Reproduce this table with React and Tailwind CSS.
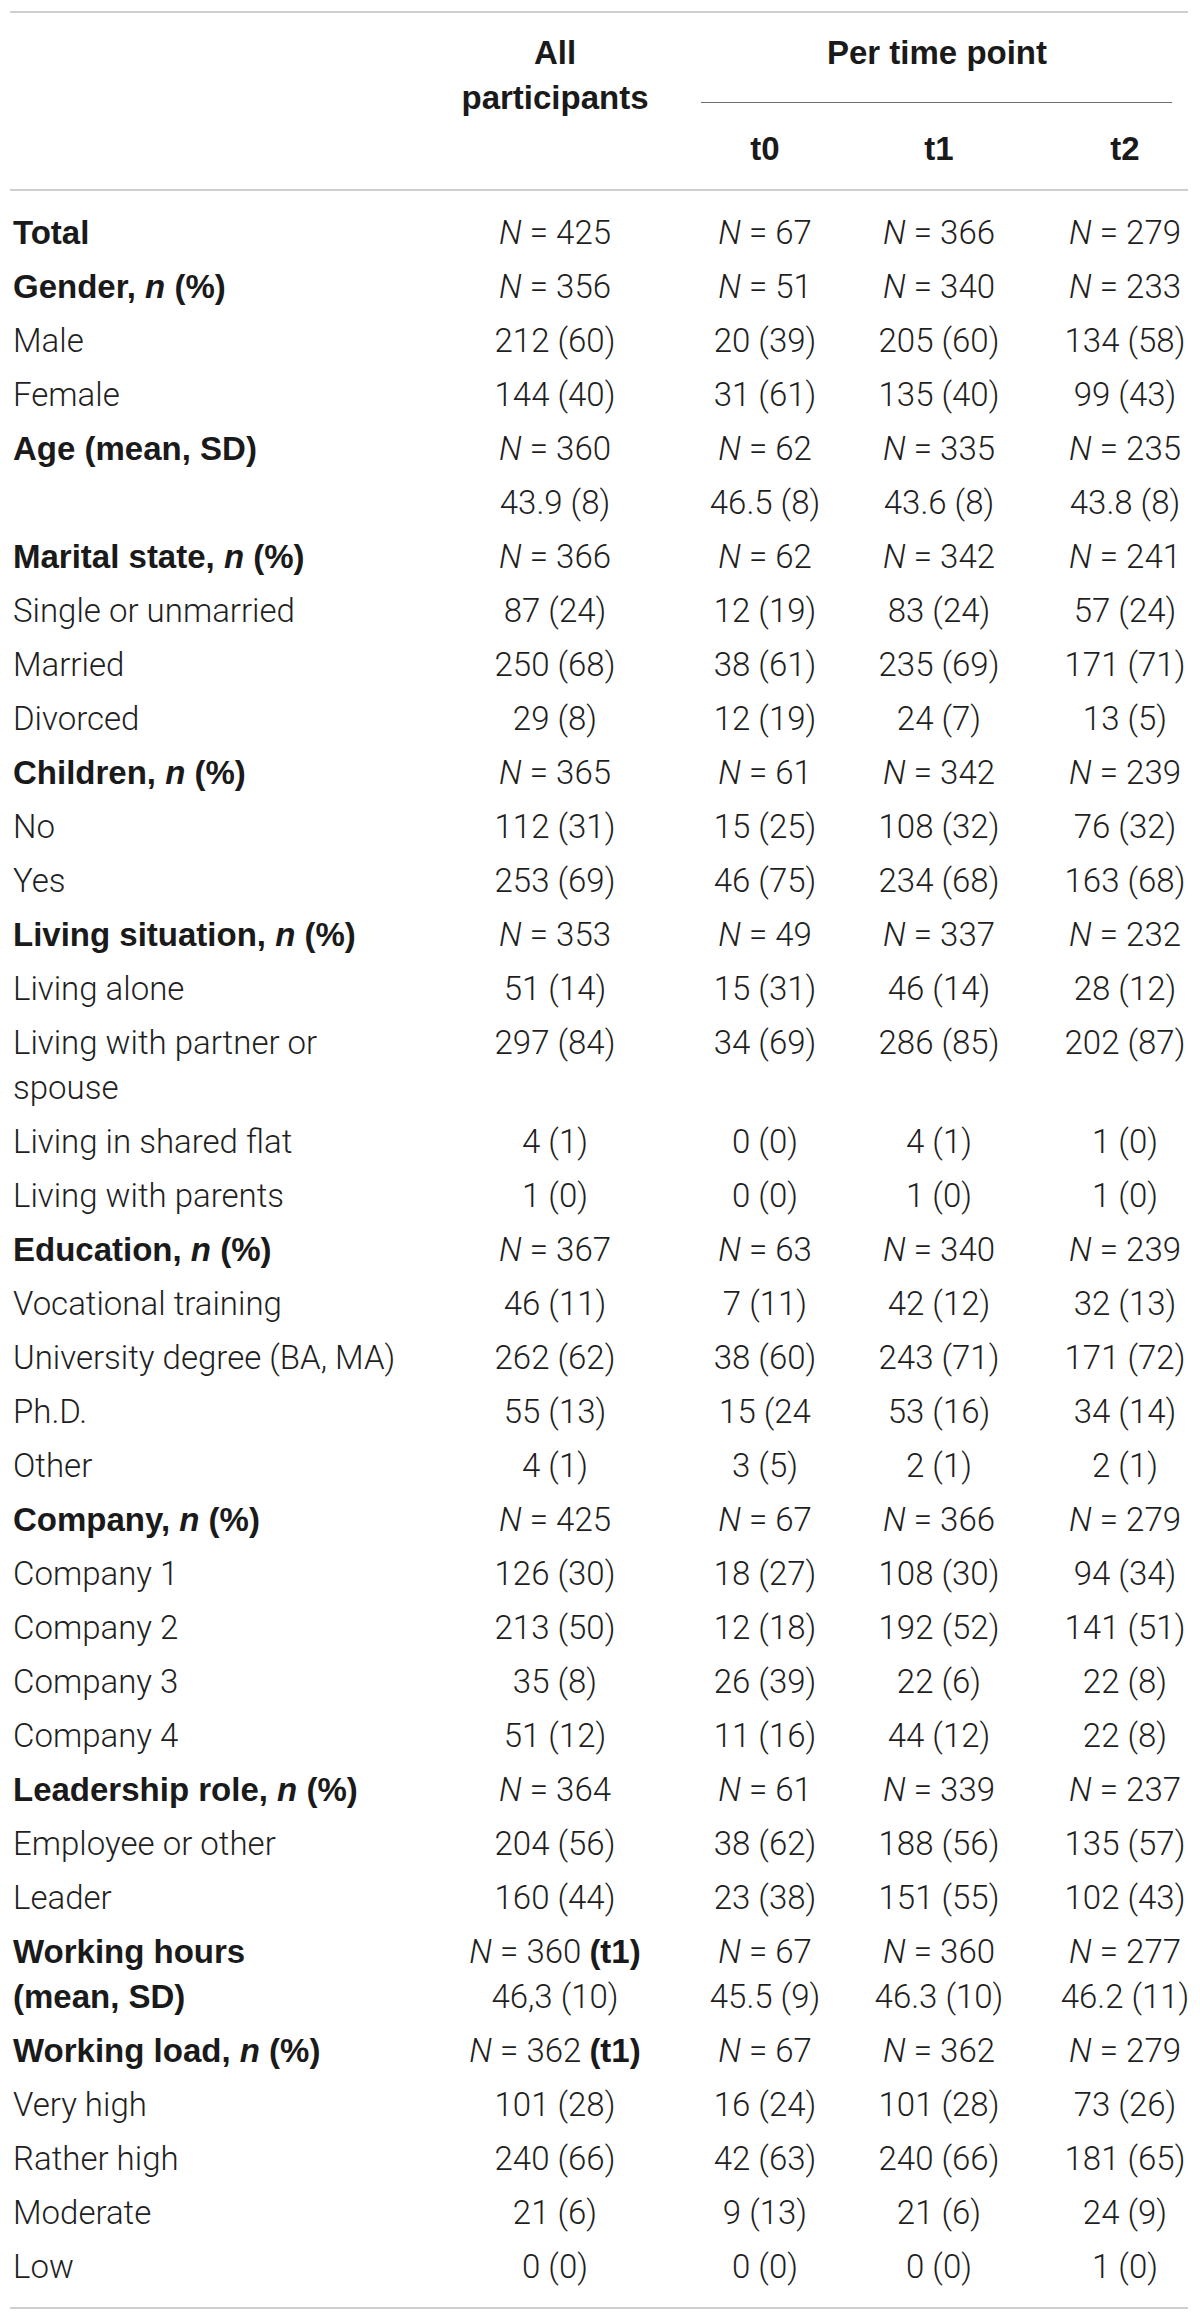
import React from "react";

// column layout: label | all participants | t0 | t1 | t2
const cols = "grid grid-cols-[386px_318px_102px_246px_126px]";
const light = "font-['Roboto','Liberation_Sans',sans-serif] font-light text-[#1f1f1f]";
const bold = "font-['Liberation_Sans','Arial',sans-serif] font-bold text-[#1a1a1a]";

const rows = [
  { head: "Total", v: ["N=425", "N=67", "N=366", "N=279"] },
  { head: "Gender", n: true, v: ["N=356", "N=51", "N=340", "N=233"] },
  { label: "Male", v: ["212 (60)", "20 (39)", "205 (60)", "134 (58)"] },
  { label: "Female", v: ["144 (40)", "31 (61)", "135 (40)", "99 (43)"] },
  { head: "Age (mean, SD)", v: ["N=360", "N=62", "N=335", "N=235"] },
  { label: "", v: ["43.9 (8)", "46.5 (8)", "43.6 (8)", "43.8 (8)"] },
  { head: "Marital state", n: true, v: ["N=366", "N=62", "N=342", "N=241"] },
  { label: "Single or unmarried", v: ["87 (24)", "12 (19)", "83 (24)", "57 (24)"] },
  { label: "Married", v: ["250 (68)", "38 (61)", "235 (69)", "171 (71)"] },
  { label: "Divorced", v: ["29 (8)", "12 (19)", "24 (7)", "13 (5)"] },
  { head: "Children", n: true, v: ["N=365", "N=61", "N=342", "N=239"] },
  { label: "No", v: ["112 (31)", "15 (25)", "108 (32)", "76 (32)"] },
  { label: "Yes", v: ["253 (69)", "46 (75)", "234 (68)", "163 (68)"] },
  { head: "Living situation", n: true, v: ["N=353", "N=49", "N=337", "N=232"] },
  { label: "Living alone", v: ["51 (14)", "15 (31)", "46 (14)", "28 (12)"] },
  { label: ["Living with partner or", "spouse"], v: ["297 (84)", "34 (69)", "286 (85)", "202 (87)"] },
  { label: "Living in shared flat", v: ["4 (1)", "0 (0)", "4 (1)", "1 (0)"] },
  { label: "Living with parents", v: ["1 (0)", "0 (0)", "1 (0)", "1 (0)"] },
  { head: "Education", n: true, v: ["N=367", "N=63", "N=340", "N=239"] },
  { label: "Vocational training", v: ["46 (11)", "7 (11)", "42 (12)", "32 (13)"] },
  { label: "University degree (BA, MA)", v: ["262 (62)", "38 (60)", "243 (71)", "171 (72)"] },
  { label: "Ph.D.", v: ["55 (13)", "15 (24", "53 (16)", "34 (14)"] },
  { label: "Other", v: ["4 (1)", "3 (5)", "2 (1)", "2 (1)"] },
  { head: "Company", n: true, v: ["N=425", "N=67", "N=366", "N=279"] },
  { label: "Company 1", v: ["126 (30)", "18 (27)", "108 (30)", "94 (34)"] },
  { label: "Company 2", v: ["213 (50)", "12 (18)", "192 (52)", "141 (51)"] },
  { label: "Company 3", v: ["35 (8)", "26 (39)", "22 (6)", "22 (8)"] },
  { label: "Company 4", v: ["51 (12)", "11 (16)", "44 (12)", "22 (8)"] },
  { head: "Leadership role", n: true, v: ["N=364", "N=61", "N=339", "N=237"] },
  { label: "Employee or other", v: ["204 (56)", "38 (62)", "188 (56)", "135 (57)"] },
  { label: "Leader", v: ["160 (44)", "23 (38)", "151 (55)", "102 (43)"] },
  {
    head: ["Working hours", "(mean, SD)"],
    v: [
      ["N=360 (t1)", "46,3 (10)"],
      ["N=67", "45.5 (9)"],
      ["N=360", "46.3 (10)"],
      ["N=277", "46.2 (11)"],
    ],
  },
  { head: "Working load", n: true, v: ["N=362 (t1)", "N=67", "N=362", "N=279"] },
  { label: "Very high", v: ["101 (28)", "16 (24)", "101 (28)", "73 (26)"] },
  { label: "Rather high", v: ["240 (66)", "42 (63)", "240 (66)", "181 (65)"] },
  { label: "Moderate", v: ["21 (6)", "9 (13)", "21 (6)", "24 (9)"] },
  { label: "Low", v: ["0 (0)", "0 (0)", "0 (0)", "1 (0)"] },
];

function Value({ text }) {
  if (!text.startsWith("N=")) return <span>{text}</span>;
  let rest = text.slice(2);
  const t1 = rest.endsWith(" (t1)");
  if (t1) rest = rest.slice(0, -5);
  return (
    <span>
      <i>N</i> = {rest}
      {t1 && (
        <>
          {" "}
          <b className={bold}>(t1)</b>
        </>
      )}
    </span>
  );
}

function Lines({ items, render }) {
  const list = Array.isArray(items) ? items : [items];
  return list.map((it, i) => (
    <div key={i} className="whitespace-nowrap">
      {render(it)}
    </div>
  ));
}

function Row({ row }) {
  return (
    <div className={`${cols} py-[4.5px] leading-[45px]`}>
      <div className="pl-[3px]">
        {row.head ? (
          <div className={bold}>
            <Lines
              items={row.head}
              render={(t) =>
                row.n ? (
                  <>
                    {t}, <i>n</i> (%)
                  </>
                ) : (
                  t
                )
              }
            />
          </div>
        ) : (
          <div className={light}>
            <Lines items={row.label} render={(t) => t || "\u00a0"} />
          </div>
        )}
      </div>
      {row.v.map((v, i) => (
        <div key={i} className={`${light} flex flex-col items-center`}>
          <Lines items={v} render={(t) => <Value text={t} />} />
        </div>
      ))}
    </div>
  );
}

export default function App() {
  return (
    <div className="bg-white w-[1200px] min-h-[2322px] pt-[11px] pl-[10px] text-[33px]">
      <div className="w-[1178px] border-t-2 border-b-2 border-[#cfcfcf]">
        {/* header */}
        <div className={`${cols} pt-[17px] pb-[18px] border-b-2 border-[#cfcfcf] leading-[45px] ${bold}`}>
          <div />
          <div className="text-center">
            All
            <br />
            participants
          </div>
          <div className="col-span-3 flex flex-col">
            <div className="text-center pr-[28px]">Per time point</div>
            <div className="h-px bg-[#6e6e6e] mt-[27px] mb-[23px] -ml-[13px] mr-[16px]" />
            <div className="grid grid-cols-[102px_246px_126px] text-center">
              <div>t0</div>
              <div>t1</div>
              <div>t2</div>
            </div>
          </div>
        </div>
        {/* body */}
        <div className="py-[14px]">
          {rows.map((r, i) => (
            <Row key={i} row={r} />
          ))}
        </div>
      </div>
    </div>
  );
}
